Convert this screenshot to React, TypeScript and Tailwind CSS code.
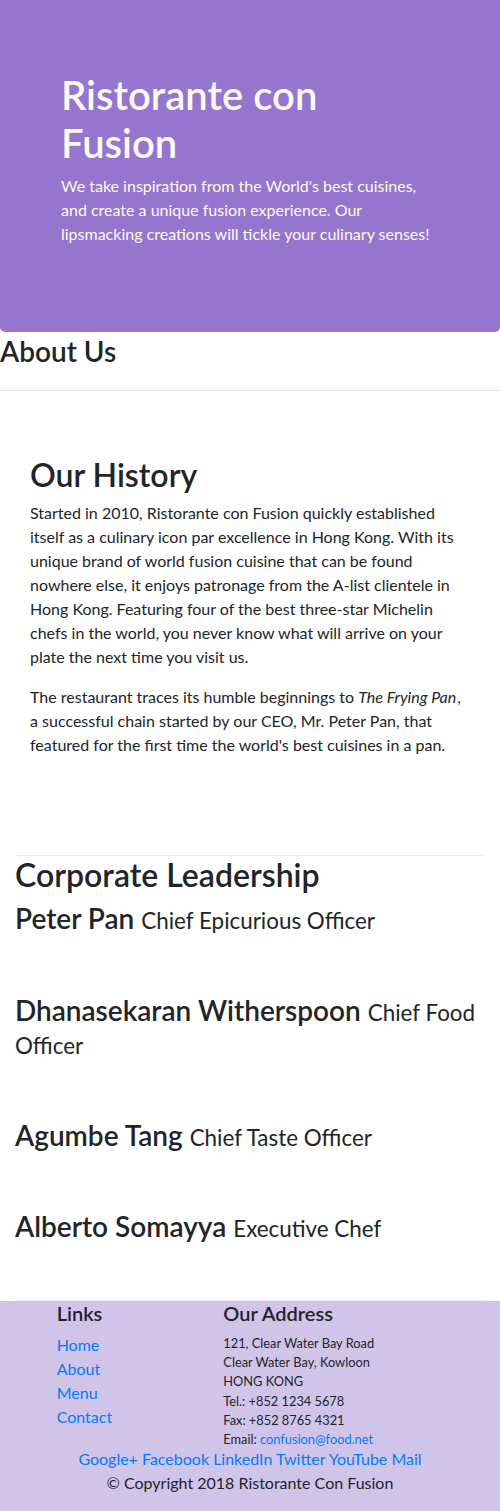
const LEADERS = [
  { name: 'Peter Pan', title: 'Chief Epicurious Officer' },
  { name: 'Dhanasekaran Witherspoon', title: 'Chief Food Officer' },
  { name: 'Agumbe Tang', title: 'Chief Taste Officer' },
  { name: 'Alberto Somayya', title: 'Executive Chef' },
];

const FONT = "font-['Lato','Open_Sans',sans-serif]";

export default function App() {
  return (
    <div className={`${FONT} bg-white text-[#212529] text-[16px] leading-[24px] w-[500px]`}>
      {/* Jumbotron */}
      <header className="bg-[#9575cd] text-[#fffaf0] rounded-b-[5px] h-[332px] px-[61px] pt-[71px]">
        <h1 className="text-[40px] leading-[48px] font-semibold mb-[7px]">Ristorante con Fusion</h1>
        <p className="w-[378px]">
          We take inspiration from the World's best cuisines, and create a unique fusion experience. Our
          lipsmacking creations will tickle your culinary senses!
        </p>
      </header>

      {/* Breadcrumb heading */}
      <div className="pt-[2px]">
        <h3 className="text-[28px] leading-[34px] font-semibold">About Us</h3>
        <hr className="mt-[22px] border-t border-[#e5e5e5]" />
      </div>

      {/* History */}
      <section className="px-[30px] pt-[65px]">
        <h2 className="text-[32px] leading-[38px] font-semibold mb-[7px]">Our History</h2>
        <p className="mb-[16px]">
          Started in 2010, Ristorante con Fusion quickly established itself as a culinary icon par excellence in
          Hong Kong. With its unique brand of world fusion cuisine that can be found nowhere else, it enjoys
          patronage from the A-list clientele in Hong Kong. Featuring four of the best three-star Michelin chefs
          in the world, you never know what will arrive on your plate the next time you visit us.
        </p>
        <p>
          The restaurant traces its humble beginnings to <em className="pr-[1px]">The Frying Pan</em>, a
          successful chain started by our CEO, Mr. Peter Pan, that featured for the first time the world's best
          cuisines in a pan.
        </p>
      </section>

      {/* Leadership */}
      <section className="px-[15px] pt-[98px]">
        <hr className="border-t border-[#ececec]" />
        <h2 className="text-[32px] leading-[38px] font-semibold mb-[8px]">Corporate Leadership</h2>
        <ul>
          {LEADERS.map((l) => (
            <li key={l.name} className="mb-[58px]">
              <h3 className="text-[28px] leading-[33.6px] font-semibold">
                {l.name} <small className="text-[22.4px] leading-[22px] font-normal">{l.title}</small>
              </h3>
            </li>
          ))}
        </ul>
        <hr className="-mt-[2px] border-t border-[#ececec]" />
      </section>

      {/* Footer */}
      <footer className="bg-[#d1c4e9] pb-[24px]">
        <div className="grid grid-cols-12">
          <div className="col-span-4 col-start-2 px-[15px]">
            <h5 className="text-[20px] leading-[24px] font-semibold mb-[8px]">Links</h5>
            <ul className="text-[#007bff]">
              <li>Home</li>
              <li>About</li>
              <li>Menu</li>
              <li>Contact</li>
            </ul>
          </div>
          <div className="col-span-7 px-[15px]">
            <h5 className="text-[20px] leading-[24px] font-semibold mb-[9px]">Our Address</h5>
            <address className="not-italic text-[12.8px] leading-[19.2px]">
              121, Clear Water Bay Road<br />
              Clear Water Bay, Kowloon<br />
              HONG KONG<br />
              Tel.: +852 1234 5678<br />
              Fax: +852 8765 4321<br />
              Email: <span className="text-[#007bff]">confusion@food.net</span>
            </address>
          </div>
        </div>
        <div className="text-center text-[#007bff] -mt-[2px]">
          Google+ Facebook LinkedIn Twitter YouTube Mail
        </div>
        <p className="text-center">© Copyright 2018 Ristorante Con Fusion</p>
      </footer>
    </div>
  );
}
